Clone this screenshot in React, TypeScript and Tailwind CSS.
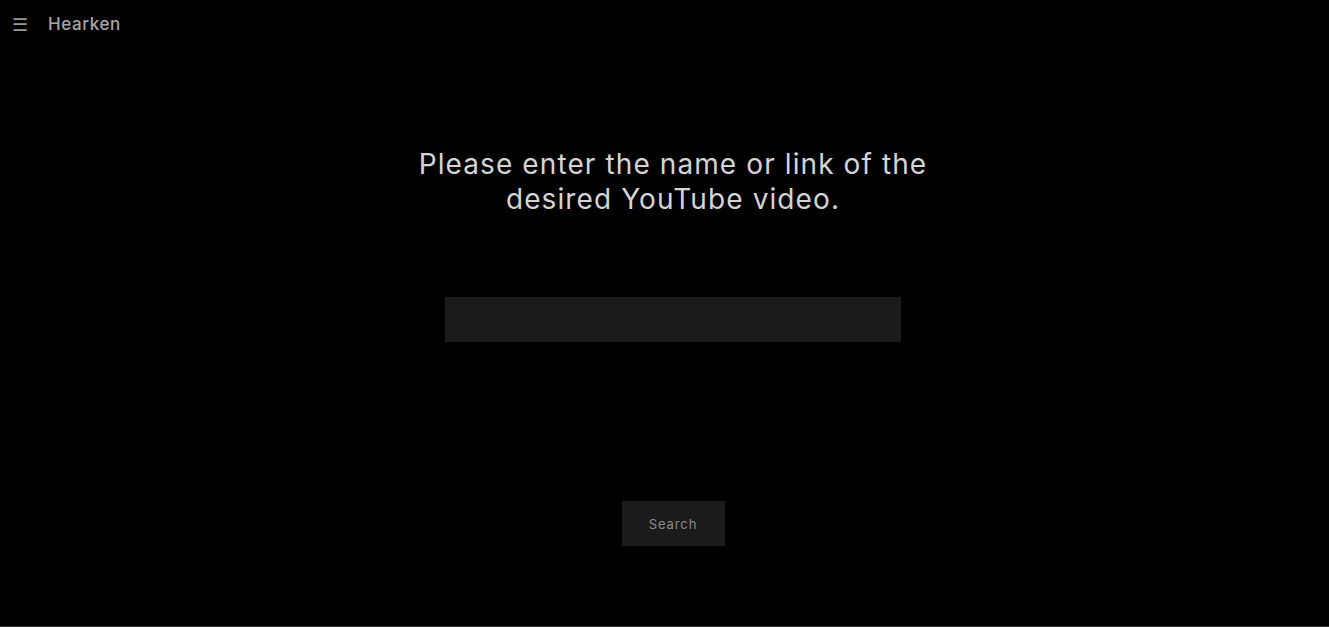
import React from "react";

export default function App() {
  return (
    <div
      className="w-[1329px] h-[627px] bg-black flex flex-col border-b border-[#3a3a3a]"
      style={{ fontFamily: "Inter, 'Noto Sans', sans-serif" }}
    >
      <header className="h-[47px] flex items-center pl-[12px] pt-[2px]">
        <span className="text-[#9a9a9a] text-[18px] leading-none w-[15px] font-light">☰</span>
        <span className="ml-[21px] text-[#a8a8a8] text-[17px] font-medium tracking-[0.6px]">Hearken</span>
      </header>
      <main className="flex flex-col items-center pl-[17px]">
        <h1 className="mt-[100px] text-center text-[#d4d4d4] text-[28px] leading-[35px] font-normal tracking-[1.1px]">
          Please enter the name or link of the
          <br />
          desired YouTube video.
        </h1>
        <input
          className="mt-[80px] w-[456px] h-[45px] bg-[#1b1b1b] outline-none text-[#cccccc] px-3"
          type="text"
        />
        <button className="mt-[159px] w-[103px] h-[45px] pt-[2px] bg-[#1b1b1b] text-[#8a8a8a] text-[13px] tracking-[0.9px]">
          Search
        </button>
      </main>
    </div>
  );
}
